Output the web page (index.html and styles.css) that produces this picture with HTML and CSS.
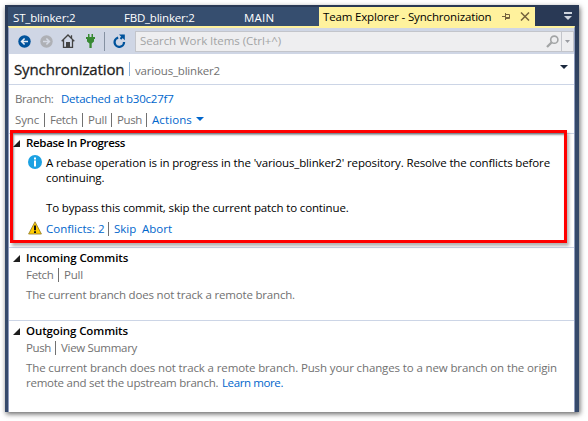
FILE: index.html
```
<!DOCTYPE html>
<html lang="en">
<head>
<meta charset="utf-8">
<title>Team Explorer - Synchronization</title>
<link rel="stylesheet" href="styles.css">
</head>
<body>
<div class="window">
  <nav class="tabs">
    <span class="tab tab-st">ST_blinker:2</span>
    <span class="tab tab-fbd">FBD_blinker:2</span>
    <span class="tab tab-main">MAIN</span>
    <div class="tab-active">
      <span class="tab-title">Team Explorer - Synchronization</span>
      <svg class="pin" width="9" height="9" viewBox="0 0 9 9"><path d="M0 4.5h3M3.5 1v7M3.5 2.5h4v4M3.5 5.5h4M3.5 6.5h4" fill="none" stroke="#75633d"/></svg>
      <svg class="close" width="10" height="9" viewBox="0 0 10 9"><path d="M1 .5l8 8M9 .5l-8 8" fill="none" stroke="#75633d" stroke-width="1.5"/></svg>
    </div>
    <svg class="tab-menu" width="8" height="8" viewBox="0 0 8 8"><path d="M0 0h8v2H0zM0 4h8L4 8z" fill="#ced4dd"/></svg>
  </nav>
  <div class="panel">
    <div class="toolbar">
      <svg class="nav-icon" width="13" height="13" viewBox="0 0 13 13"><circle cx="6.5" cy="6.5" r="6.2" fill="#00539c"/><path d="M10 6.5H4M6.6 3.5l-3 3 3 3" fill="none" stroke="#e8eef6" stroke-width="1.6"/></svg>
      <svg class="nav-icon forward" width="13" height="13" viewBox="0 0 13 13"><circle cx="6.5" cy="6.5" r="6.2" fill="#aeb0b5"/><path d="M3 6.5h6M6.4 3.5l3 3-3 3" fill="none" stroke="#d5dae5" stroke-width="1.6"/></svg>
      <svg class="home" width="14" height="14" viewBox="0 0 14 14"><path d="M.7 7.3L7 1l6.3 6.3M2.5 6v7.4h9V6M10.5 4V1.2" fill="none" stroke="#424242" stroke-width="1.3"/><path d="M5 8h4v6H5z" fill="#424242"/></svg>
      <svg class="plug" width="9" height="14" viewBox="0 0 9 14"><path d="M2 0h1.5v3h2V0H7v3h2v2H8v2.5L5.7 9.5V14H3.4V9.5L1 7.5V5H0V3h2z" fill="#388a34"/></svg>
      <i class="tool-divider"></i>
      <svg class="refresh" width="13" height="14" viewBox="0 0 13 14"><path d="M5.2 3.6A4.7 4.7 0 1 0 11 8" fill="none" stroke="#00539c" stroke-width="2.3"/><path d="M6 .4h5.8v5.8z" fill="#00539c"/><path d="M10.5 1.5L7.5 5" stroke="#00539c" stroke-width="2"/></svg>
      <div class="search">
        <span class="search-text">Search Work Items (Ctrl+^)</span>
        <svg class="magnifier" width="13" height="13" viewBox="0 0 13 13"><circle cx="8.3" cy="4.7" r="3.6" fill="none" stroke="#a2a4a5" stroke-width="1.6"/><path d="M5.5 7.5L1 12" stroke="#a2a4a5" stroke-width="2.3"/></svg>
        <span class="search-drop"><svg width="5" height="3" viewBox="0 0 5 3"><path d="M0 0h5L2.5 3z" fill="#999ba0"/></svg></span>
      </div>
    </div>
    <header class="page-head">
      <h1>Synchronization</h1><i class="head-divider"></i><span class="repo">various_blinker2</span>
      <svg class="head-menu" width="8" height="4" viewBox="0 0 8 4"><path d="M0 0h8L4 4z" fill="#1b293e"/></svg>
    </header>
    <section class="branch">
      <div class="row branch-row"><span class="branch-label">Branch:</span><a class="detached">Detached at b30c27f7</a></div>
      <div class="row"><span class="sync">Sync</span><i class="sep"></i><span class="fetch">Fetch</span><i class="sep"></i><span class="pull">Pull</span><i class="sep"></i><span class="push">Push</span><i class="sep"></i><a class="actions">Actions</a><svg class="actions-arrow" width="8" height="4" viewBox="0 0 8 4"><path d="M0 0h8L4 4z" fill="#0066cc"/></svg></div>
    </section>
    <section class="rebase">
      <div class="highlight">
        <h2 class="rebase-title"><svg class="expander" width="7" height="7" viewBox="0 0 7 7"><path d="M7 0v7H0z" fill="#1e1e1e"/></svg>Rebase In Progress</h2>
        <div class="message">
          <svg class="info" width="14" height="14" viewBox="0 0 14 14"><circle cx="7" cy="7" r="7" fill="#1ba1e2"/><path d="M6 2.5h2v2H6zM6 5.5h2v6H6z" fill="#fff"/></svg>
          <div class="message-text">
            <p>A rebase operation is in progress in the 'various_blinker2' repository. Resolve the conflicts before<br>continuing.</p>
            <p>To bypass this commit, skip the current patch to continue.</p>
          </div>
        </div>
        <div class="row conflict-row">
          <svg class="warning" width="14" height="14" viewBox="0 0 14 14"><path d="M7 .8L13.4 13H.6z" fill="#fc0" stroke="#9b8430" stroke-width=".9" stroke-linejoin="round"/><path d="M6 4.5h2v4.7H6zM6 10.2h2V12H6z" fill="#111"/></svg>
          <a class="conflicts">Conflicts: 2</a><i class="sep"></i><a class="skip">Skip</a><a>Abort</a>
        </div>
      </div>
    </section>
    <section class="commits incoming">
      <h2><svg class="expander" width="7" height="7" viewBox="0 0 7 7"><path d="M7 0v7H0z" fill="#1e1e1e"/></svg>Incoming Commits</h2>
      <div class="row"><span class="fetch">Fetch</span><i class="sep"></i><span class="pull">Pull</span></div>
      <p class="note"><span class="note-short">The current branch does not track a remote branch.</span></p>
    </section>
    <section class="commits outgoing">
      <h2><svg class="expander" width="7" height="7" viewBox="0 0 7 7"><path d="M7 0v7H0z" fill="#1e1e1e"/></svg>Outgoing Commits</h2>
      <div class="row"><span class="push">Push</span><i class="sep"></i><span class="view">View Summary</span></div>
      <p class="note">The current branch does not track a remote branch. Push your changes to a new branch on the origin<br><span class="note-end">remote and set the upstream branch. </span><a class="learn">Learn more.</a></p>
    </section>
  </div>
</div>
</body>
</html>
```
FILE: styles.css
```
* { box-sizing: border-box; }
html, body { height: 100%; }
body {
  margin: 0;
  padding: 5px 0 0 5px;
  overflow: hidden;
  background: #fff;
  color: #717171;
  font: 11.5px/15px "Open Sans", "Noto Sans", sans-serif;
  white-space: nowrap;
}
h1, h2, p { margin: 0; }
svg, i { display: block; flex: none; }
a { color: #0066cc; }

.window {
  width: 574px;
  height: 407px;
  background: linear-gradient(#293955, #35496a 30%);
  box-shadow: 1px 2px 5px rgba(0, 0, 0, .6);
}

/* document tabs */
.tabs {
  display: flex;
  height: 21px;
  padding-top: 2px;
  margin-left: 3px;
  background: #293955;
  color: #fff;
}
.tab { height: 19px; padding-left: 5px; line-height: 21px; background: #364e6f; }
.tab-st { width: 111px; letter-spacing: -.16px; }
.tab-fbd { width: 120px; letter-spacing: -.22px; }
.tab-main { width: 80px; letter-spacing: .25px; }
.tab-active {
  display: flex;
  align-items: center;
  width: 216px;
  padding-left: 4px;
  background: #fff29d;
  color: #000;
}
.tab-title { width: 179px; height: 19px; line-height: 20px; letter-spacing: -.165px; }
.close { margin-left: 9px; }
.tab-menu { margin: 5px 0 0 29px; }

.panel {
  width: 567px;
  height: 386px;
  margin-left: 3px;
  border: 1px solid #8e9bbc;
  border-top: 2px solid #fff29d;
  border-bottom: 0;
  background: #fff;
}

/* toolbar */
.toolbar {
  display: flex;
  align-items: center;
  height: 26px;
  padding-left: 9px;
  background: #cfd6e5;
}
.forward { margin-left: 9px; }
.home { margin-left: 8px; }
.plug { margin-left: 11px; }
.tool-divider { width: 1px; height: 19px; margin-left: 9px; background: #8591a2; }
.refresh { margin-left: 8px; }
.search {
  display: flex;
  align-items: center;
  width: 439px;
  height: 21px;
  margin-left: 9px;
  border: 1px solid #c3c5cb;
  background: #eeeef0;
  color: #a2a4a5;
}
.search-text { width: 410px; padding-left: 4px; line-height: 14px; margin-top: -1px; letter-spacing: -.05px; }
.search-drop {
  display: flex;
  align-items: center;
  justify-content: center;
  width: 12px;
  height: 19px;
  margin-left: 2px;
  border-left: 1px solid #c3c5cb;
}

/* page heading */
.page-head {
  display: flex;
  align-items: center;
  height: 31px;
  padding-left: 5px;
  border-bottom: 1px solid #ccd5e6;
}
h1 {
  width: 115px;
  color: #1e1e1e;
  font-size: 15px;
  font-weight: 500;
  line-height: 22px;
  letter-spacing: -.12px;
  -webkit-text-stroke: .3px #1e1e1e;
}
.head-divider { width: 1px; height: 14px; background: #8fb4dc; }
.repo { width: 425px; padding: 2px 0 0 5px; letter-spacing: -.18px; }
.head-menu { margin: -4px 0 0 5px; }

/* command rows */
.row { display: flex; align-items: center; height: 16px; }
.sep { width: 1px; height: 14px; margin: 1px 5px 0 0; background: #717171; }
.branch { height: 49px; padding: 5px 0 0 6px; border-bottom: 1px solid #ccd5e6; }
.branch-row { margin-bottom: 5px; }
.branch-label { width: 46px; letter-spacing: -.38px; }
.detached { letter-spacing: -.23px; }
.sync { width: 29px; letter-spacing: -.15px; }
.fetch { width: 32px; letter-spacing: -.3px; }
.pull { width: 23px; letter-spacing: -.2px; }
.push { width: 29px; letter-spacing: -.4px; }
.actions { width: 44px; letter-spacing: .1px; }

/* sections */
h2 {
  display: flex;
  align-items: center;
  height: 16px;
  color: #000;
  font-size: 11.5px;
  font-weight: 600;
  line-height: 16px;
  letter-spacing: -.11px;
}
.expander { margin-right: 6px; }
.rebase { height: 114px; border-bottom: 1px solid #ccd5e6; }
.highlight {
  position: relative;
  top: -4px;
  width: 557px;
  height: 113px;
  margin-left: 1px;
  padding: 2px 0 0 1px;
  border: 3px solid #f00;
  box-shadow: 2px 3px 3px rgba(0, 0, 0, .3), inset 1px 2px 2px rgba(0, 0, 0, .4);
}
.rebase-title { letter-spacing: -.33px; margin-left: -1px; }
.message { display: flex; padding: 4px 0 0 14px; }
.info { margin-right: 4px; }
.message-text { color: #000; letter-spacing: -.133px; }
.message-text p + p { margin-top: 15px; }
.conflict-row { margin-top: 5px; padding-left: 14px; }
.warning { margin-right: 4px; }
.conflicts { width: 62px; }
.skip { width: 28px; }

.commits { padding: 2px 0 0 17px; }
.commits h2 { margin-left: -13px; }
.incoming { height: 73px; border-bottom: 1px solid #ccd5e6; }
.note { margin-top: 5px; letter-spacing: -.123px; }
.note-short { letter-spacing: -.185px; }
.note-end { display: inline-block; width: 196px; letter-spacing: -.25px; }
.learn { letter-spacing: -.39px; }
.view { letter-spacing: -.3px; }
```
